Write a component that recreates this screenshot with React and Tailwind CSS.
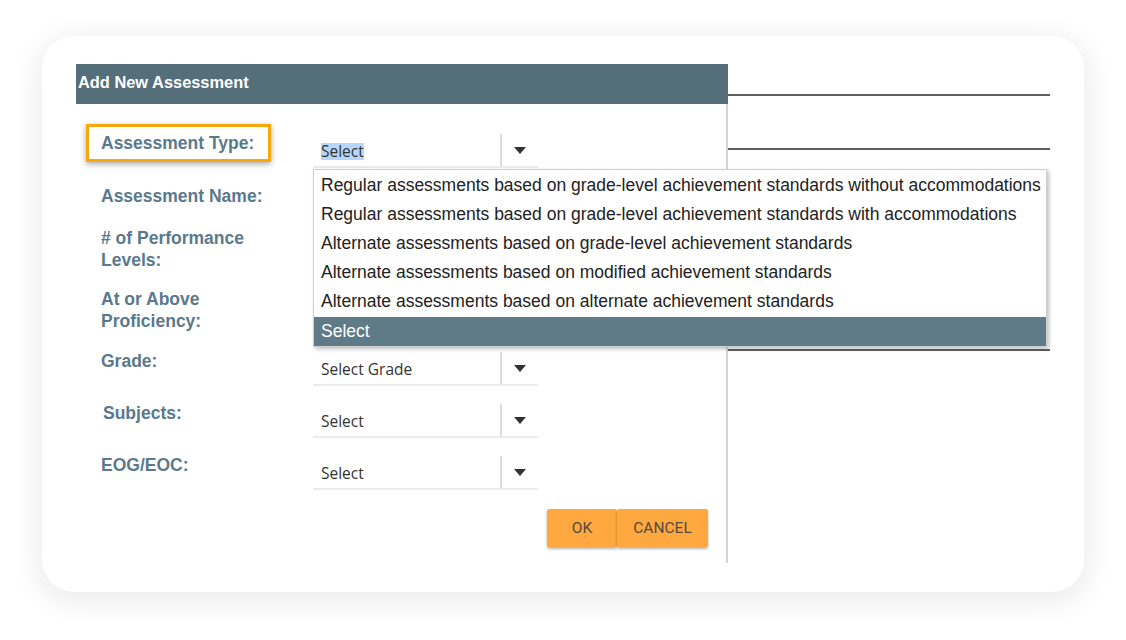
import { useState } from 'react';

const options = [
  'Regular assessments based on grade-level achievement standards without accommodations',
  'Regular assessments based on grade-level achievement standards with accommodations',
  'Alternate assessments based on grade-level achievement standards',
  'Alternate assessments based on modified achievement standards',
  'Alternate assessments based on alternate achievement standards',
];

const Arrow = () => (
  <svg width="12" height="7" viewBox="0 0 12 7" className="block">
    <path d="M0 0 L12 0 L6 7 Z" fill="#333" />
  </svg>
);

const SelectBox = ({ value, highlight, children }) => (
  <div className="relative w-[225px] h-[34px] flex items-center border-b-2 border-[#ececec] mt-[2px]">
    <div className="flex-1 pl-[8px] pt-[3px] text-[15.5px] text-[#333] font-['Open_Sans',sans-serif]">
      <span className={highlight ? 'bg-[#b7d6fb] leading-[17px] inline-block' : ''}>{value}</span>
    </div>
    <div className="w-[2px] h-full bg-[#dcdcdc]" />
    <div className="w-[36px] flex items-center justify-center">
      <Arrow />
    </div>
    {children}
  </div>
);

const Label = ({ children, className = '' }) => (
  <div className={`text-[17.5px] leading-[22px] font-bold text-[#5a798d] ${className}`}>{children}</div>
);

const App = () => {
  const [selected] = useState(5);

  return (
    <div className="w-[1126px] h-[640px] bg-white pt-[36px] pl-[42px] font-['Liberation_Sans',Arial,sans-serif]">
      <div className="w-[1042px] h-[556px] bg-white rounded-[32px] shadow-[0_6px_26px_6px_rgba(0,0,0,0.07)] pt-[28px] pl-[34px] flex">
        {/* Dialog */}
        <div className="w-[652px] flex flex-col">
          <div className="h-[40px] bg-[#546e7a] flex items-center pl-[2px] pb-[3px] text-white text-[16.4px] font-bold">
            Add New Assessment
          </div>
          <div className="border-r-2 border-[#d4d4d4] pt-[28px] pb-[16px] flex flex-col">
            {/* Assessment Type */}
            <div className="h-[53px] flex">
              <div className="w-[237px] pl-[25px]">
                <Label className="inline-block -ml-[15px] -mt-[8px] border-[3px] border-[#f6a80c] pl-[12px] pr-[14px] py-[5px] shadow-[0_2px_6px_rgba(0,0,0,0.35)]">
                  Assessment Type:
                </Label>
              </div>
              <SelectBox value="Select" highlight>
                <div className="absolute left-0 top-[35px] w-[734px] z-10 bg-white border border-[#cfcfcf] pt-[1px] shadow-[2px_2px_4px_rgba(0,0,0,0.25)] text-[17.5px] text-[#222]">
                  {options.map((o) => (
                    <div key={o} className="h-[29px] flex items-center pl-[7px] whitespace-nowrap">
                      {o}
                    </div>
                  ))}
                  <div
                    className={`mt-[1px] h-[29px] flex items-center pl-[7px] ${
                      selected === 5 ? 'bg-[#607b88] text-white' : ''
                    }`}
                  >
                    Select
                  </div>
                </div>
              </SelectBox>
            </div>

            <div className="h-[42px] pl-[25px]">
              <Label>Assessment Name:</Label>
            </div>
            <div className="h-[61px] pl-[25px]">
              <Label>
                # of Performance
                <br />
                Levels:
              </Label>
            </div>
            <div className="h-[62px] pl-[25px]">
              <Label>
                At or Above
                <br />
                Proficiency:
              </Label>
            </div>

            <div className="h-[52px] flex">
              <div className="w-[237px] pl-[25px]">
                <Label>Grade:</Label>
              </div>
              <SelectBox value="Select Grade" />
            </div>
            <div className="h-[52px] flex">
              <div className="w-[237px] pl-[27px]">
                <Label>Subjects:</Label>
              </div>
              <SelectBox value="Select" />
            </div>
            <div className="h-[55px] flex">
              <div className="w-[237px] pl-[25px]">
                <Label>EOG/EOC:</Label>
              </div>
              <SelectBox value="Select" />
            </div>

            <div className="flex justify-end pr-[18px] font-['Roboto',sans-serif] text-[15.5px] text-[#544a40]">
              <button className="w-[70px] h-[38px] bg-[#ffa83f] rounded-[2px] pt-[1px] shadow-[0_2px_3px_rgba(0,0,0,0.3)]">OK</button>
              <button className="w-[91px] h-[38px] bg-[#ffa83f] rounded-[2px] pt-[1px] shadow-[0_2px_3px_rgba(0,0,0,0.3)]">CANCEL</button>
            </div>
          </div>
        </div>

        {/* Background lines on the right */}
        <div className="w-[322px] flex flex-col">
          <div className="h-[30px]" />
          <div className="h-[2px] bg-[#5f5f5f]" />
          <div className="h-[52px]" />
          <div className="h-[2px] bg-[#5f5f5f]" />
          <div className="h-[199px]" />
          <div className="h-[2px] bg-[#5f5f5f]" />
        </div>
      </div>
    </div>
  );
};

export default App;
